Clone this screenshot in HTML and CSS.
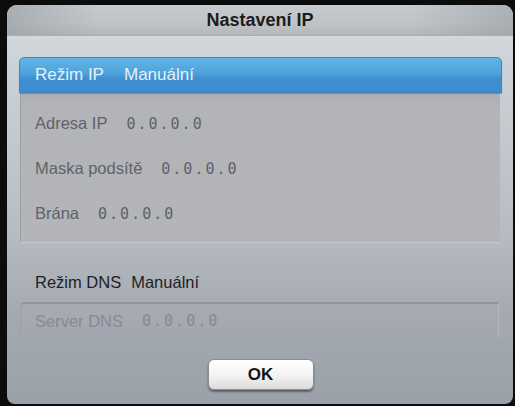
FILE: index.html
```html
<!DOCTYPE html>
<html lang="cs">
<head>
<meta charset="utf-8">
<title>Nastavení IP</title>
<link rel="stylesheet" href="styles.css">
</head>
<body>
<div class="dialog">
  <div class="header">Nastavení IP</div>
  <div class="content">
    <div class="mode-bar">
      <span class="mode-label">Režim IP</span>
      <span class="mode-value">Manuální</span>
    </div>
    <div class="ip-panel">
      <div class="row"><span class="label">Adresa IP</span><span class="ip">0.0.0.0</span></div>
      <div class="row"><span class="label">Maska podsítě</span><span class="ip">0.0.0.0</span></div>
      <div class="row"><span class="label">Brána</span><span class="ip">0.0.0.0</span></div>
    </div>
    <div class="dns-mode">
      <span>Režim DNS</span>
      <span>Manuální</span>
    </div>
    <div class="dns-panel">
      <div class="row dns-row"><span class="label">Server DNS</span><span class="ip">0.0.0.0</span></div>
    </div>
    <div class="actions">
      <button class="ok-btn">OK</button>
    </div>
  </div>
</div>
</body>
</html>
```

FILE: styles.css
```css
html, body {
  margin: 0;
  padding: 0;
  background: #0c0c0c;
  width: 515px;
  height: 406px;
  overflow: hidden;
}

body {
  font-family: "Liberation Sans", Arial, sans-serif;
}

.dialog {
  margin: 5px 2px 0 7px;
  width: 506px;
  height: 399px;
  border-radius: 10px 10px 8px 8px;
  overflow: hidden;
  background: linear-gradient(to bottom, #d8dde1 0px, #cdd2d7 60px, #b7bcc3 230px, #a6abb3 300px, #9ba1a9 399px);
  display: flex;
  flex-direction: column;
}

.header {
  height: 31px;
  flex: none;
  display: flex;
  align-items: center;
  justify-content: center;
  font-size: 18px;
  font-weight: bold;
  color: #1b1c1e;
  background:
    linear-gradient(to right, rgba(150,156,162,0.6) 0%, rgba(255,255,255,0) 18%, rgba(255,255,255,0) 80%, rgba(150,156,162,0.55) 100%),
    linear-gradient(to bottom, #c6cacd 0%, #c0c4c7 60%, #b3b7bb 100%);
  border-bottom: 1px solid #a8aeb3;
  box-sizing: border-box;
}

.content {
  flex: 1;
  display: flex;
  flex-direction: column;
  padding: 21px 12px 0 12px;
}

.mode-bar {
  height: 36px;
  box-sizing: border-box;
  margin-right: -1px;
  border-radius: 5px 5px 0 0;
  border: 1px solid #3f86c0;
  background: linear-gradient(to bottom, #62b4e4 0%, #4ea3dc 45%, #3f90d2 60%, #3c8ccf 100%);
  display: flex;
  align-items: center;
  padding-left: 15px;
  font-size: 17px;
  color: #e6f0f9;
  gap: 20px;
  box-shadow: 0 1px 1px rgba(40,60,90,0.35);
  position: relative;
}

.ip-panel {
  margin: 0 1px 0 1px;
  height: 150px;
  box-sizing: border-box;
  background: linear-gradient(to bottom, #aeafb4 0%, #b3b4b8 10%, #b4b5b9 100%);
  border-left: 1px solid #9d9fa4;
  border-bottom: 1px solid #c6c9cd;
  padding: 8px 0 0 14px;
  display: flex;
  flex-direction: column;
}

.row {
  height: 45px;
  display: flex;
  align-items: center;
  gap: 19px;
  font-size: 16.5px;
  color: #5f6268;
}

.ip {
  font-family: "DejaVu Sans Mono", "Liberation Mono", monospace;
  font-size: 15px;
  letter-spacing: 2px;
}

.dns-mode {
  margin-top: 24px;
  height: 30px;
  display: flex;
  align-items: center;
  gap: 10px;
  padding-left: 16px;
  font-size: 16.5px;
  color: #1e1f22;
}

.dns-panel {
  margin: 5px 2px 0 1px;
  height: 36px;
  box-sizing: border-box;
  border-top: 2px solid #8f939a;
  border-left: 1px solid #9a9ea5;
  border-right: 1px solid #b4b8be;
  border-radius: 5px 0 0 0;
  background: linear-gradient(to bottom, #a7abb3, #a2a6ae);
  padding-left: 14px;
}

.dns-row {
  height: 34px;
  color: #878a91;
}

.actions {
  display: flex;
  justify-content: center;
  padding-top: 21px;
}

.ok-btn {
  width: 106px;
  height: 31px;
  border: 1px solid #8a8c90;
  border-radius: 6px;
  background: linear-gradient(to bottom, #ffffff 0%, #f4f4f4 50%, #dcdcdc 100%);
  box-shadow: 0 2px 2px rgba(40,40,50,0.55);
  font-family: "Liberation Sans", Arial, sans-serif;
  font-size: 17px;
  font-weight: bold;
  color: #141414;
  padding: 0;
  margin-left: 1px;
}
```
